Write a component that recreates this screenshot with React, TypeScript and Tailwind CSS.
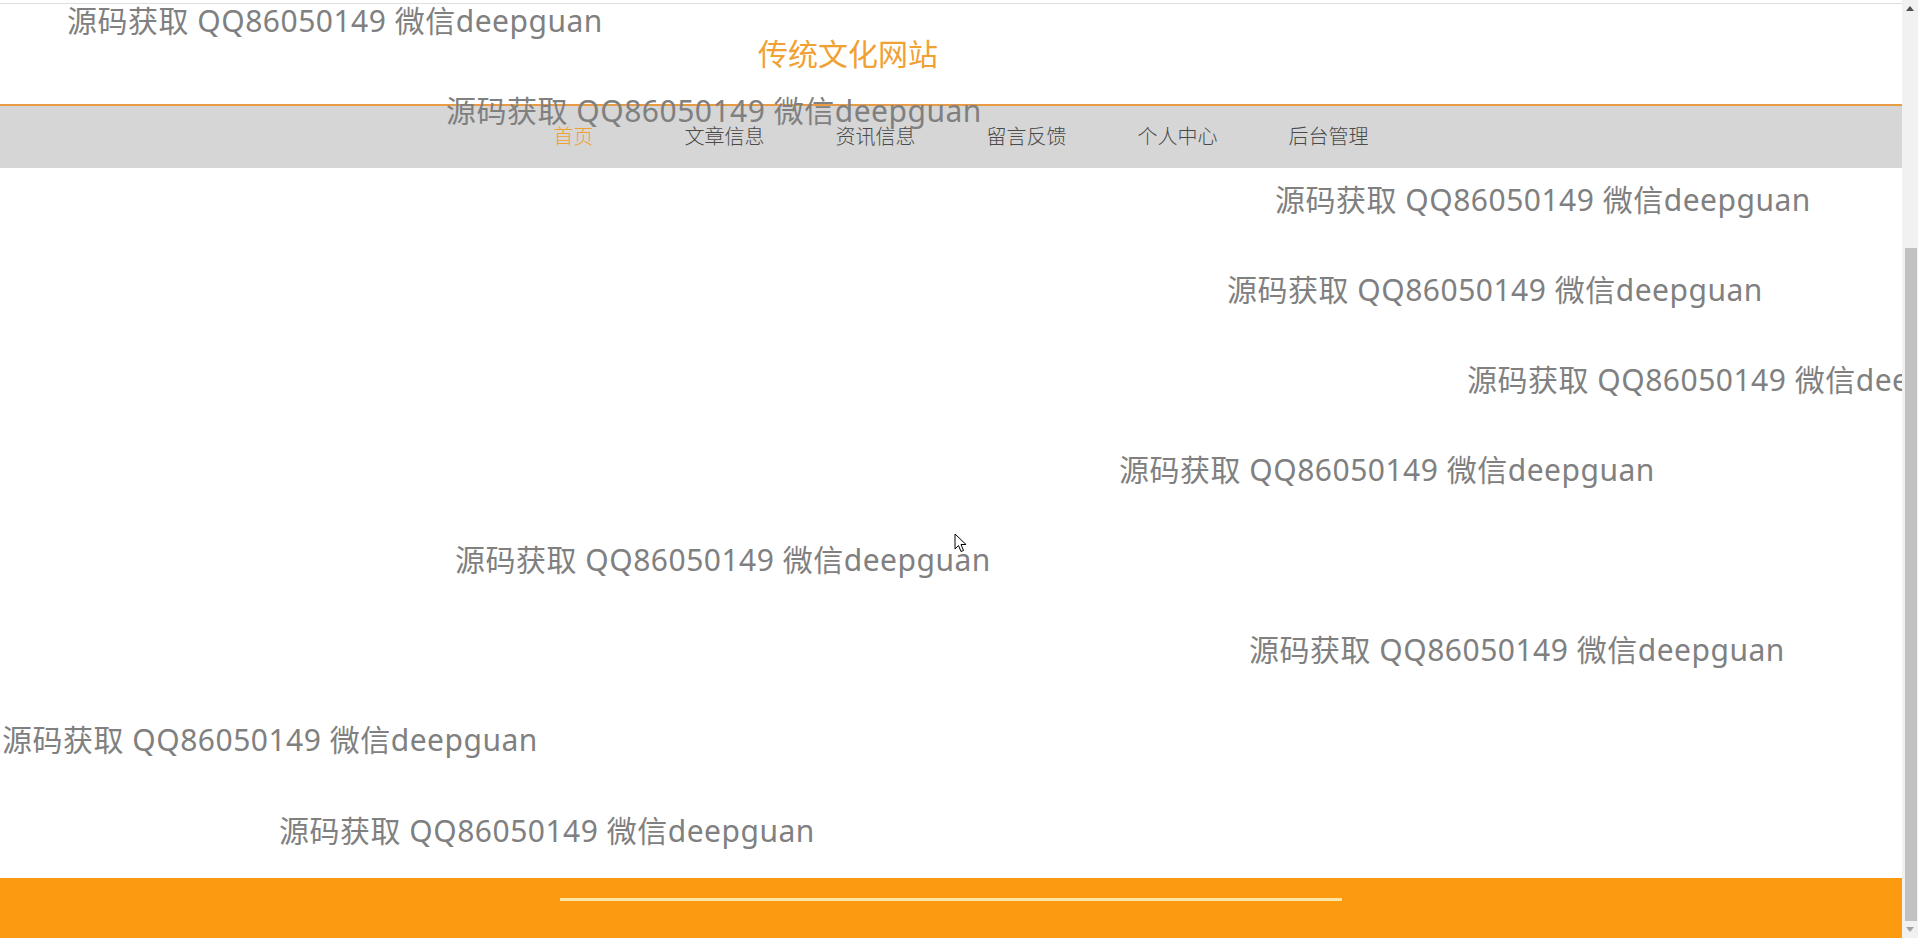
import React from 'react';

const marks = [
  { x: 67, y: 22 },
  { x: 446, y: 112 },
  { x: 1275, y: 201 },
  { x: 1227, y: 291 },
  { x: 1467, y: 381 },
  { x: 1119, y: 471 },
  { x: 455, y: 561 },
  { x: 1249, y: 651 },
  { x: 2, y: 741 },
  { x: 279, y: 832 },
];

const navItems = ['首页', '文章信息', '资讯信息', '留言反馈', '个人中心', '后台管理'];

const font = { fontFamily: '"Noto Sans", "Noto Sans CJK SC", sans-serif' };

const App: React.FC = () => {
  return (
    <div className="flex h-[938px] w-full overflow-hidden bg-white" style={font}>
      <div className="relative flex min-w-0 flex-1 flex-col overflow-hidden">
        <div className="h-[3px] shrink-0" />
        <div className="h-px shrink-0 bg-[#dedede]" />

        {/* header */}
        <div className="flex h-[100px] shrink-0 items-center pl-[758px]">
          <h1 className="text-[30px] leading-none text-[#f0a133]">传统文化网站</h1>
        </div>
        <div className="h-[2px] shrink-0 bg-[#e99a45]" />

        {/* nav */}
        <nav className="flex h-[62px] shrink-0 items-center justify-center bg-[#d6d6d6]">
          {navItems.map((item, i) => (
            <a
              key={item}
              className={`w-[151px] text-center text-[20px] font-light leading-none ${i === 0 ? 'text-[#f0a030]' : 'text-[#4a4a4a]'}`}
            >
              {item}
            </a>
          ))}
        </nav>

        <main className="flex-1" />

        {/* footer */}
        <footer className="flex h-[60px] shrink-0 justify-center bg-[#fd9b10] pt-[20px]">
          <div className="h-[3px] w-[782px] bg-[#fde7a8]" />
        </footer>

        {/* watermarks */}
        {marks.map((m, i) => (
          <span
            key={i}
            className="pointer-events-none absolute whitespace-nowrap text-[30px] leading-[30px] tracking-[0.5px] text-[#808080]"
            style={{ left: m.x, top: m.y - 16 }}
          >
            源码获取 QQ86050149 微信deepguan
          </span>
        ))}

        {/* mouse cursor */}
        <svg className="absolute left-[954px] top-[533px]" width="13" height="20" viewBox="0 0 13 20">
          <path d="M1 1 L1 16 L4.5 12.5 L7 18.5 L9.5 17.5 L7 11.5 L12 11.5 Z" fill="#fff" stroke="#000" strokeWidth="1" strokeLinejoin="round" />
        </svg>
      </div>

      {/* scrollbar */}
      <div className="flex w-[16px] shrink-0 flex-col bg-[#f1f1f1]">
        <div className="flex h-[17px] shrink-0 items-center justify-center">
          <svg width="8" height="5" viewBox="0 0 8 5">
            <path d="M0 5 L4 0 L8 5 Z" fill="#505050" />
          </svg>
        </div>
        <div className="h-[231px] shrink-0" />
        <div className="ml-[3px] mr-px flex-1 bg-[#c1c1c1]" />
        <div className="flex h-[17px] shrink-0 items-center justify-center">
          <svg width="8" height="5" viewBox="0 0 8 5">
            <path d="M0 0 L4 5 L8 0 Z" fill="#a3a3a3" />
          </svg>
        </div>
      </div>
    </div>
  );
};

export default App;
